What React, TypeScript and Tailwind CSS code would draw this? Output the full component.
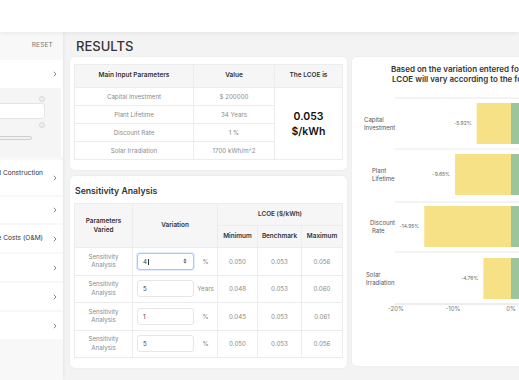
import React from "react";

const inputs = [
  ["Capital Investment", "$ 200000"],
  ["Plant Lifetime", "34 Years"],
  ["Discount Rate", "1 %"],
  ["Solar Irradiation", "1700 kWh/m^2"],
];

const sensitivity = [
  { value: "4", unit: "%", min: "0.050", bench: "0.053", max: "0.056", focused: true },
  { value: "5", unit: "Years", min: "0.048", bench: "0.053", max: "0.060" },
  { value: "1", unit: "%", min: "0.045", bench: "0.053", max: "0.061" },
  { value: "5", unit: "%", min: "0.050", bench: "0.053", max: "0.056" },
];

// lx: left edge of the two-line category label
const bars = [
  { lines: ["Capital", "Investment"], pct: -5.92, y: 13, lx: [12, 12] },
  { lines: ["Plant", "Lifetime"], pct: -9.65, y: 64, lx: [20, 20] },
  { lines: ["Discount", "Rate"], pct: -14.95, y: 116, lx: [18, 20] },
  { lines: ["Solar", "Irradiation"], pct: -4.76, y: 168, lx: [14, 14] },
];

function Chevron() {
  return (
    <svg width="4" height="6" viewBox="0 0 4 6" className="shrink-0">
      <polyline points="0.8,0.8 3,3 0.8,5.2" fill="none" stroke="#666" strokeWidth="0.8" />
    </svg>
  );
}

function Info() {
  return (
    <svg width="6" height="6" viewBox="0 0 6 6">
      <circle cx="3" cy="3" r="2.5" fill="none" stroke="#c4c4c4" strokeWidth="0.6" />
      <line x1="3" y1="2.6" x2="3" y2="4.5" stroke="#c4c4c4" strokeWidth="0.6" />
      <circle cx="3" cy="1.6" r="0.35" fill="#c4c4c4" />
    </svg>
  );
}

function SideItem({ label, h, pb = 0 }: { label: string; h: string; pb?: number }) {
  return (
    <div className={`flex items-center justify-end bg-white pr-[6px] ${h}`}>
      <span
        className="shrink-0 whitespace-nowrap text-[6.6px] text-[#333]"
        style={{ paddingBottom: pb }}
      >
        {label}
      </span>
      <span className="w-[10px] shrink-0" />
      <Chevron />
    </div>
  );
}

function Sidebar() {
  return (
    <aside className="relative z-10 flex w-[63px] shrink-0 flex-col overflow-hidden bg-[#f8f8f8] shadow-[1px_0_3px_rgba(0,0,0,0.06)]">
      <div className="flex h-[28px] items-center justify-end pr-[10px] text-[6.5px] tracking-[0.03em] text-[#777]">
        RESET
      </div>
      <div className="bg-white">
        <div className="flex h-[28px] items-center justify-end pr-[6px]">
          <Chevron />
        </div>
        <div className="mr-[2px] flex h-[69px] flex-col items-end bg-[#f5f5f5] pr-[16px] pt-[8px]">
          <Info />
          <div className="mt-[1px] h-[16px] w-[54px] shrink-0 self-start -ml-[9px] rounded-[3px] border border-[#e4e4e4] bg-white" />
          <div className="mt-[3px]">
            <Info />
          </div>
          <div className="mt-[8px] h-[4px] w-[40px] shrink-0 self-start -ml-[8px] rounded-full border border-[#cfcfcf] bg-[#f2f2f2]" />
        </div>
      </div>
      <div className="mt-[3px] flex flex-col gap-[2px]">
        <SideItem label="Engineering, Procurement and Construction" h="h-[35px]" pb={7} />
        <SideItem label="" h="h-[26px]" />
        <SideItem label="Operation and Maintenance Costs (O&M)" h="h-[27px]" />
        <SideItem label="" h="h-[27px]" />
        <SideItem label="" h="h-[27px]" />
        <SideItem label="" h="h-[27px]" />
      </div>
    </aside>
  );
}

function ResultsCard() {
  return (
    <div className="rounded-[5px] bg-white pb-[10px] pl-[4px] pr-[5px] pt-[7px] shadow-[0_0_3px_rgba(0,0,0,0.05)]">
      <table className="w-[268px] table-fixed border-collapse text-center text-[6.2px]">
        <colgroup>
          <col className="w-[119px]" />
          <col className="w-[81px]" />
          <col className="w-[68px]" />
        </colgroup>
        <thead>
          <tr className="h-[23px] bg-[#f6f6f6] text-[6.5px] text-[#333]">
            <th className="border border-[#ececec] font-semibold">Main Input Parameters</th>
            <th className="border border-[#ececec] font-semibold">Value</th>
            <th className="border border-[#ececec] font-semibold">The LCOE is</th>
          </tr>
        </thead>
        <tbody className="text-[#8a8a8a]">
          {inputs.map(([name, value], i) => (
            <tr key={name} className="h-[18px]">
              <td className="border border-[#ececec]">{name}</td>
              <td className="border border-[#ececec]">{value}</td>
              {i === 0 && (
                <td
                  rowSpan={4}
                  className="border border-[#ececec] text-[10.5px] font-semibold leading-[15px] text-[#111]"
                >
                  0.053
                  <br />
                  $/kWh
                </td>
              )}
            </tr>
          ))}
        </tbody>
      </table>
    </div>
  );
}

function SensitivityCard() {
  const th = "border border-[#ececec] font-semibold";
  const td = "border border-[#ececec]";
  return (
    <div className="flex-1 rounded-[5px] bg-white pb-[10px] pl-[4px] pr-[5px] pt-[9px] shadow-[0_0_3px_rgba(0,0,0,0.05)]">
      <h2 className="pl-[1px] text-[8.7px] font-semibold leading-[12px] text-[#333]">Sensitivity Analysis</h2>
      <table className="mt-[6px] w-[268px] table-fixed border-collapse text-center text-[6.2px]">
        <colgroup>
          <col className="w-[58px]" />
          <col className="w-[85px]" />
          <col className="w-[40px]" />
          <col className="w-[44px]" />
          <col className="w-[41px]" />
        </colgroup>
        <thead className="bg-[#f6f6f6] text-[6.4px] text-[#333]">
          <tr className="h-[22px]">
            <th rowSpan={2} className={`${th} leading-[8.5px]`}>
              Parameters
              <br />
              Varied
            </th>
            <th rowSpan={2} className={th}>
              Variation
            </th>
            <th colSpan={3} className={th}>
              LCOE ($/kWh)
            </th>
          </tr>
          <tr className="h-[22px]">
            <th className={th}>Minimum</th>
            <th className={th}>Benchmark</th>
            <th className={th}>Maximum</th>
          </tr>
        </thead>
        <tbody className="text-[#8a8a8a]">
          {sensitivity.map((row, i) => (
            <tr key={i} className="h-[27.5px]">
              <td className={`${td} leading-[8.5px]`}>
                Sensitivity
                <br />
                Analysis
              </td>
              <td className={td}>
                <div className="flex items-center pl-[4px]">
                  <div
                    className={`flex h-[17px] w-[57px] shrink-0 items-center justify-between rounded-[3px] border bg-white pl-[5px] pr-[6px] text-left text-[#444] ${
                      row.focused ? "border-[#a9c8f5] shadow-[0_0_0_1px_rgba(170,200,245,0.35)]" : "border-[#e6e6e6]"
                    }`}
                  >
                    <span>
                      {row.value}
                      {row.focused && <span className="ml-[0.5px] inline-block h-[6px] w-[0.6px] bg-[#333] align-middle" />}
                    </span>
                    {row.focused && (
                      <svg width="4" height="6" viewBox="0 0 4 6">
                        <polygon points="2,0.5 3.6,2.4 0.4,2.4" fill="#555" />
                        <polygon points="2,5.5 3.6,3.6 0.4,3.6" fill="#555" />
                      </svg>
                    )}
                  </div>
                  <span className="flex-1 text-center">{row.unit}</span>
                </div>
              </td>
              <td className={td}>{row.min}</td>
              <td className={td}>{row.bench}</td>
              <td className={td}>{row.max}</td>
            </tr>
          ))}
        </tbody>
      </table>
    </div>
  );
}

function Tornado() {
  const zero = 159;
  const scale = 5.8;
  return (
    <svg width="220" height="260" className="mt-[6px] block" fontFamily="Inter, sans-serif">
      {[8, 59, 112, 162].map((y) => (
        <line key={y} x1="43" x2="220" y1={y} y2={y} stroke="#e8e8e8" strokeWidth="1" />
      ))}
      <line x1="43" x2="220" y1="214" y2="214" stroke="#dcdcdc" strokeWidth="1" />
      {bars.map((b) => {
        const x = zero + b.pct * scale;
        const cy = b.y + 20.5;
        return (
          <g key={b.lines[0]}>
            <rect x={x} y={b.y} width={zero - x} height="41" fill="#f7e187" />
            <rect x={zero} y={b.y} width="40" height="41" fill="#9dc59b" />
            <text x={x - 5} y={cy + 1.8} fontSize="5" fill="#666" textAnchor="end">
              {b.pct.toFixed(2)}%
            </text>
            <text x={b.lx[0]} y={cy - 1.5} fontSize="6" fill="#555">
              {b.lines[0]}
            </text>
            <text x={b.lx[1]} y={cy + 6} fontSize="6" fill="#555">
              {b.lines[1]}
            </text>
          </g>
        );
      })}
      {[
        ["-20%", 44],
        ["-10%", 101],
        ["0%", 159],
      ].map(([t, x]) => (
        <text key={t} x={x} y="221" fontSize="6" fill="#777" textAnchor="middle">
          {t}
        </text>
      ))}
    </svg>
  );
}

export default function App() {
  return (
    <div className="flex h-[380px] w-[519px] flex-col overflow-hidden bg-[#f3f3f3] font-['Inter',sans-serif]">
      <header className="relative z-20 h-[32px] shrink-0 bg-white shadow-[0_1px_4px_rgba(0,0,0,0.07)]" />
      <div className="flex min-h-0 flex-1">
        <Sidebar />
        <main className="min-w-0 flex-1 overflow-hidden pl-[7px] pt-[3px]">
          <h1 className="ml-[6px] text-[13px] font-medium leading-[22px] text-[#333]">RESULTS</h1>
          <div className="flex gap-[5px]">
            <div className="flex h-[309px] w-[277px] shrink-0 flex-col gap-[6px]">
              <ResultsCard />
              <SensitivityCard />
            </div>
            <div className="h-[309px] w-[220px] shrink-0 rounded-[5px] bg-white pt-[7px] shadow-[0_0_3px_rgba(0,0,0,0.05)]">
              <div className="whitespace-nowrap pl-[39px] text-[8px] font-semibold leading-[10px] text-[#333]">
                <div>Based on the variation entered for each parameter, the</div>
                <div className="pl-[1px]">LCOE will vary according to the following chart</div>
              </div>
              <Tornado />
            </div>
          </div>
        </main>
      </div>
    </div>
  );
}
